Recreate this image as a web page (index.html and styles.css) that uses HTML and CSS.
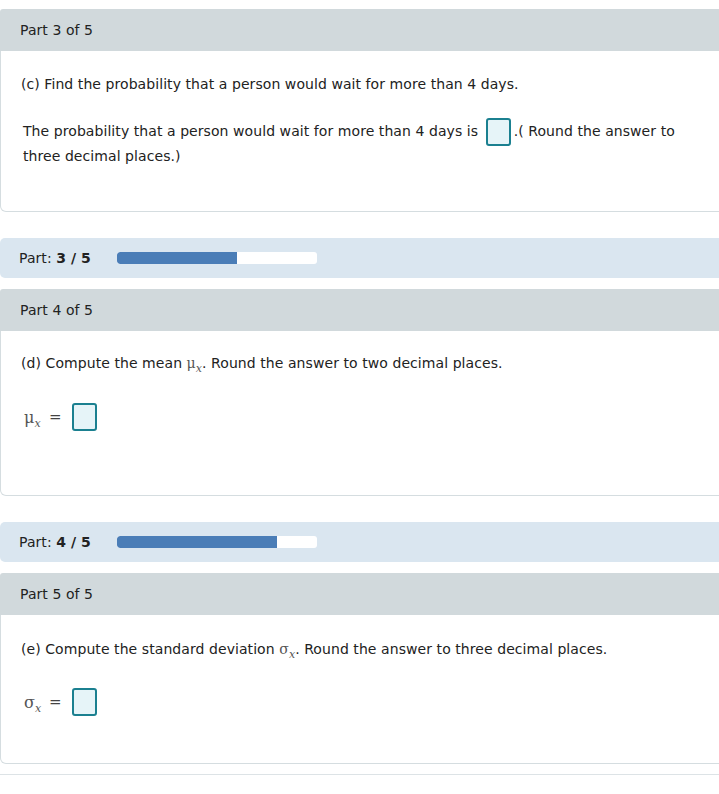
FILE: index.html
```html
<!DOCTYPE html>
<html>
<head>
<meta charset="utf-8">
<link rel="stylesheet" href="styles.css">
</head>
<body>
<div class="page">
  <div class="part-header">Part 3 of 5</div>
  <div class="card card-c">
    <p class="question">(c) Find the probability that a person would wait for more than 4 days.</p>
    <p class="answer-text"><span>The probability that a person would wait for more than 4 days is</span> <span class="box inline-box"></span><span>.( Round the answer to</span> <span>three decimal places.)</span></p>
  </div>

  <div class="progress">
    <span class="progress-label">Part: <b>3 / 5</b></span>
    <div class="track"><div class="fill" style="width:60%"></div></div>
  </div>

  <div class="part-header">Part 4 of 5</div>
  <div class="card card-d">
    <p class="question">(d) Compute the mean <span class="math">μ<sub>x</sub></span>. Round the answer to two decimal places.</p>
    <div class="eq-row">
      <span class="math big">μ<sub>x</sub></span>
      <span class="eq">=</span>
      <span class="box"></span>
    </div>
  </div>

  <div class="progress">
    <span class="progress-label">Part: <b>4 / 5</b></span>
    <div class="track"><div class="fill" style="width:80%"></div></div>
  </div>

  <div class="part-header">Part 5 of 5</div>
  <div class="card card-e">
    <p class="question">(e) Compute the standard deviation <span class="math">σ<sub>x</sub></span>. Round the answer to three decimal places.</p>
    <div class="eq-row eq-row-e">
      <span class="math big">σ<sub>x</sub></span>
      <span class="eq">=</span>
      <span class="box"></span>
    </div>
  </div>

  <div class="separator"></div>
</div>
</body>
</html>
```

FILE: styles.css
```css
html, body {
  margin: 0;
  padding: 0;
  background: #ffffff;
  overflow: hidden;
}
body {
  font-family: "DejaVu Sans", Verdana, sans-serif;
  font-size: 14px;
  letter-spacing: 0.07px;
  color: #222;
}
.page {
  padding-top: 9px;
  width: 725px;
}
.part-header {
  height: 42px;
  line-height: 42px;
  background: #d1d9dc;
  padding-left: 20px;
  border-radius: 3px 0 0 0;
  color: #222;
}
.card {
  border: 1px solid #d5dde0;
  border-top: none;
  border-radius: 0 0 6px 6px;
  padding-left: 20px;
}
.card-c { padding-top: 23px; padding-bottom: 42px; }
.card-d { padding-top: 22px; padding-bottom: 64px; }
.card-e { padding-top: 24px; padding-bottom: 47px; }
.question {
  margin: 0;
  line-height: 20px;
}
.answer-text {
  margin: 25px 0 0 2px;
  line-height: 25px;
  width: 660px;
}
.box {
  display: inline-block;
  box-sizing: border-box;
  width: 25px;
  height: 28px;
  border: 2px solid #1b8090;
  border-radius: 3px;
  background: #e6f4f8;
}
.inline-box {
  vertical-align: middle;
  margin: -4px 3px -4px 3px;
}
.math {
  font-family: "DejaVu Serif", "Liberation Serif", serif;
  color: #555;
}
.math sub {
  font-size: 11px;
  font-style: italic;
  vertical-align: -4px;
  line-height: 0;
}
.eq-row {
  display: flex;
  align-items: center;
  height: 28px;
  margin-top: 30px;
  padding-left: 3px;
}
.eq-row-e {
  margin-top: 29px;
}
.math.big {
  font-size: 16px;
  width: 25px;
}
.eq {
  width: 23px;
  color: #444;
  font-family: "DejaVu Sans", sans-serif;
  font-size: 15px;
}
.progress {
  display: flex;
  align-items: center;
  height: 40px;
  margin-top: 26px;
  margin-bottom: 11px;
  background: #dae6f0;
  border-radius: 5px 0 0 5px;
  padding-left: 19px;
}
.progress-label {
  width: 98px;
}
.progress-label b {
  font-weight: bold;
}
.track {
  width: 200px;
  height: 12px;
  background: #ffffff;
  border-radius: 3px;
  overflow: hidden;
}
.fill {
  height: 100%;
  background: #4a7db7;
  border-radius: 3px 0 0 3px;
}
.separator {
  margin-top: 10px;
  border-top: 1px solid #dde3e6;
}
```
